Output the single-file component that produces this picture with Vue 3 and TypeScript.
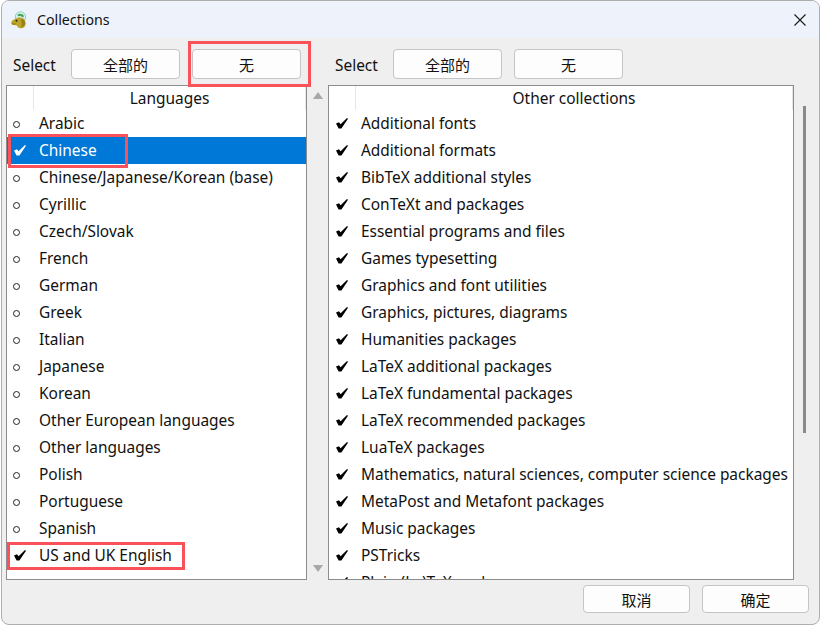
<script setup lang="ts">
const languages: { name: string; on: boolean; selected?: boolean }[] = [
  { name: 'Arabic', on: false },
  { name: 'Chinese', on: true, selected: true },
  { name: 'Chinese/Japanese/Korean (base)', on: false },
  { name: 'Cyrillic', on: false },
  { name: 'Czech/Slovak', on: false },
  { name: 'French', on: false },
  { name: 'German', on: false },
  { name: 'Greek', on: false },
  { name: 'Italian', on: false },
  { name: 'Japanese', on: false },
  { name: 'Korean', on: false },
  { name: 'Other European languages', on: false },
  { name: 'Other languages', on: false },
  { name: 'Polish', on: false },
  { name: 'Portuguese', on: false },
  { name: 'Spanish', on: false },
  { name: 'US and UK English', on: true },
]
const others: string[] = [
  'Additional fonts',
  'Additional formats',
  'BibTeX additional styles',
  'ConTeXt and packages',
  'Essential programs and files',
  'Games typesetting',
  'Graphics and font utilities',
  'Graphics, pictures, diagrams',
  'Humanities packages',
  'LaTeX additional packages',
  'LaTeX fundamental packages',
  'LaTeX recommended packages',
  'LuaTeX packages',
  'Mathematics, natural sciences, computer science packages',
  'MetaPost and Metafont packages',
  'Music packages',
  'PSTricks',
  'Plain (La)TeX packages',
]
</script>

<template>
  <div class="dialog">
    <header class="titlebar">
      <svg class="logo" width="18" height="18" viewBox="0 0 18 18">
        <circle cx="9.5" cy="6" r="5.2" fill="#d6f1ea" stroke="#86d3c2" stroke-width="1" />
        <path d="M6.5 3.6c2-1.4 5-1 6.5 1.4l-1 1.6C10.500 5 8.500 4.600 7 5.400z" fill="#4b9f5f" />
        <path d="M.6 10.200c.8-1.200 2.400-1.400 3.400-2.200 2-1.800 6-2.200 8.400-.4 2.400 2 3 5.800 1.400 7.800-1.400 1.800-4.200 2.400-6.400 1.400-.8-.6-1-1.800-1.800-2.200-1.200-.4-3.400 0-4.600-1-.8-.8-.8-2.400-.4-3.400z" fill="#bda52a" />
        <path d="M9.500 8.400c2.400-.8 4.400.8 4.600 3.400.1 2.400-1.600 4.200-4 4.200 1-2.400.8-5.200-.6-7.600z" fill="#957f17" />
        <circle cx="5.500" cy="9.800" r="1" fill="#2a2205" />
        <path d="M.8 12.600c1.200.6 2.600.6 3.800.2" stroke="#6e5d10" stroke-width=".7" fill="none" />
      </svg>
      <span class="title">Collections</span>
      <svg class="close" width="12" height="12" viewBox="0 0 12 12">
        <path d="M.5.5l11 11M11.500.5l-11 11" stroke="#1a1a1a" stroke-width="1.100" fill="none" />
      </svg>
    </header>

    <main class="body">
      <div class="columns">
        <div class="toolbar">
          <span class="select">Select</span>
          <button class="btn" type="button">全部的</button>
          <button class="btn" type="button">无</button>
        </div>
        <div class="toolbar">
          <span class="select">Select</span>
          <button class="btn" type="button">全部的</button>
          <button class="btn" type="button">无</button>
        </div>
        <div></div>

        <div class="left-col">
          <section class="list">
            <div class="list-head">
              <span class="head-mark"></span>
              <span class="head-label">Languages</span>
            </div>
            <div
              v-for="item in languages"
              :key="item.name"
              class="row"
              :class="{ selected: item.selected }"
            >
              <span class="mark">
                <svg v-if="item.on" class="check" width="12" height="11" viewBox="0 0 12 11">
                  <path d="M0 5.600 3 4.200 4.600 6.200 11 0 12 .8 5.400 10.600H2.600z" />
                </svg>
                <i v-else class="dot"></i>
              </span>
              <span class="label">{{ item.name }}</span>
            </div>
          </section>
          <div class="gutter">
            <i class="arrow up"></i>
            <i class="arrow down"></i>
          </div>
        </div>

        <section class="list">
          <div class="list-head">
            <span class="head-mark"></span>
            <span class="head-label">Other collections</span>
          </div>
          <div v-for="name in others" :key="name" class="row">
            <span class="mark">
              <svg class="check" width="12" height="11" viewBox="0 0 12 11">
                <path d="M0 5.600 3 4.200 4.600 6.200 11 0 12 .8 5.400 10.600H2.600z" />
              </svg>
            </span>
            <span class="label">{{ name }}</span>
          </div>
        </section>

        <div class="track"><i class="thumb"></i></div>
      </div>

      <footer class="footer">
        <button class="btn small" type="button">取消</button>
        <button class="btn small" type="button">确定</button>
      </footer>

      <i class="mark-box box-none"></i>
      <i class="mark-box box-chinese"></i>
      <i class="mark-box box-english"></i>
    </main>
  </div>
</template>

<style>
html,
body {
  margin: 0;
  background: #fff;
  overflow: hidden;
}
</style>

<style scoped>
.dialog {
  position: relative;
  box-sizing: border-box;
  width: 819px;
  height: 625px;
  margin-left: 1px;
  border: 1px solid #aeaeae;
  border-radius: 8px;
  background: #efefef;
  overflow: hidden;
  display: flex;
  flex-direction: column;
  font-family: "Noto Sans", "Noto Sans CJK SC", sans-serif;
  font-size: 15.45px;
  color: #111;
}
.titlebar {
  flex: 0 0 37px;
  display: flex;
  align-items: center;
  padding: 0 13px 0 9px;
  background: #eef3fb;
}
.logo {
  flex: none;
}
.title {
  margin-left: 8px;
  font-size: 14.2px;
  flex: 1;
}
.body {
  flex: 1;
  padding: 11px 10px 0 4px;
  display: flex;
  flex-direction: column;
}
.columns {
  display: grid;
  grid-template-columns: 322px 466px 1fr;
  grid-template-rows: 30px 495px;
  row-gap: 6px;
}
.toolbar {
  display: flex;
  align-items: center;
  padding-left: 7px;
}
.select {
  width: 58px;
  padding-top: 2px;
}
.btn {
  box-sizing: border-box;
  width: 109px;
  height: 30px;
  margin: 0 12px 0 0;
  padding: 0;
  border: 1px solid #c4c4c4;
  border-radius: 4px;
  background: #fdfdfd;
  font: inherit;
  font-size: 15px;
  color: #111;
}
.btn.small {
  width: 107px;
  height: 28px;
  margin: 0 0 0 12px;
}
.left-col {
  display: flex;
}
.left-col .list {
  width: 301px;
  flex: none;
}
.gutter {
  flex: 1;
  display: flex;
  flex-direction: column;
  justify-content: space-between;
  align-items: center;
  padding: 7px 0 8px;
}
.arrow {
  width: 0;
  height: 0;
  border-left: 5px solid transparent;
  border-right: 5px solid transparent;
}
.arrow.up {
  border-bottom: 7px solid #a8a8a8;
}
.arrow.down {
  border-top: 7px solid #a8a8a8;
}
.list {
  box-sizing: border-box;
  height: 495px;
  border: 1px solid #8c8c8c;
  background: #fff;
  overflow: hidden;
}
.list-head {
  height: 24px;
  display: flex;
  align-items: center;
}
.head-mark {
  box-sizing: border-box;
  flex: 0 0 27px;
  height: 24px;
  border-right: 1px solid #e6e6e6;
}
.head-label {
  flex: 1;
  text-align: center;
  border-right: 1px solid #e6e6e6;
  height: 24px;
  line-height: 24px;
}
.row {
  height: 27px;
  display: flex;
  align-items: center;
  white-space: nowrap;
}
.label {
  padding-bottom: 2px;
}
.row.selected {
  background: #0078d7;
  color: #fff;
}
.mark {
  flex: 0 0 32px;
  box-sizing: border-box;
  padding-left: 7px;
  display: flex;
  align-items: center;
}
.check {
  fill: #000;
}
.selected .check {
  fill: #fff;
}
.dot {
  box-sizing: border-box;
  width: 7px;
  height: 7px;
  margin: 1px 0 0 -1px;
  border: 1px solid #222;
  border-radius: 50%;
}
.track {
  padding: 21px 0 0 9px;
}
.thumb {
  display: block;
  width: 3px;
  height: 327px;
  background: #8a8a8a;
}
.footer {
  margin-top: 5px;
  display: flex;
  justify-content: flex-end;
}
.mark-box {
  position: absolute;
  box-sizing: border-box;
  border: 3px solid #f9525a;
  pointer-events: none;
}
.box-none {
  left: 186px;
  top: 40px;
  width: 123px;
  height: 46px;
}
.box-chinese {
  left: 6px;
  top: 133px;
  width: 120px;
  height: 34px;
}
.box-english {
  left: 5px;
  top: 541px;
  width: 178px;
  height: 28px;
}
</style>
